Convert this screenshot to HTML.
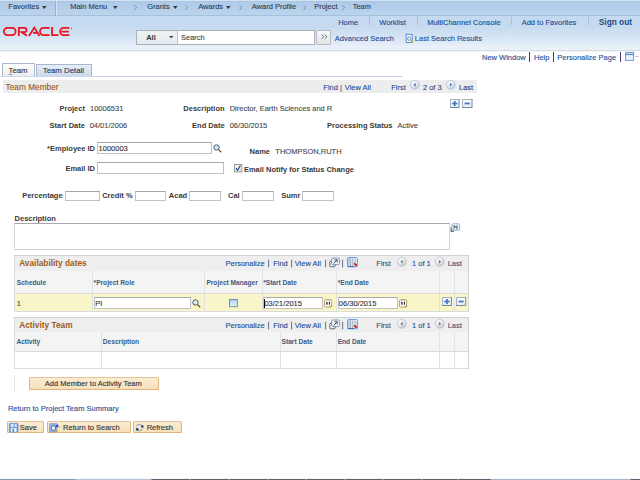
<!DOCTYPE html>
<html><head><meta charset="utf-8">
<style>
html,body{margin:0;padding:0;width:640px;height:480px;overflow:hidden;background:#fff;}
body{position:relative;font-family:"Liberation Sans",sans-serif;}
.t{position:absolute;white-space:nowrap;font-size:7.5px;line-height:10px;color:#333;-webkit-text-stroke:0.12px currentColor;}
.lk{color:#1f4f98;}
.nav{color:#2f3e55;}
.lab{color:#3a3a3a;font-weight:bold;-webkit-text-stroke:0;}
.val{color:#4a4a4a;}
.gh{color:#3d5a83;font-weight:bold;font-size:6.6px;-webkit-text-stroke:0;}
.bx{position:absolute;box-sizing:border-box;}
.inp{position:absolute;box-sizing:border-box;background:#fff;border:1px solid #c2c2c2;border-top-color:#a8a8a8;}
svg{display:block;}
</style></head><body>
<div class="bx" style="left:0px;top:0px;width:640px;height:16px;background:linear-gradient(#adcae8,#b4cfeb 50%,#bcd4ed);border-top:1px solid #d4e3f2;border-bottom:1px solid #a6c0da;"></div>
<div class="bx" style="left:0px;top:1px;width:640px;height:1px;background:#a9c5e3;"></div>
<div class="bx" style="left:0px;top:16px;width:640px;height:34px;background:linear-gradient(#c4daf0 0%,#c6dbf0 33%,#d2e2f3 55%,#dde9f6 75%,#e9f0f8 90%,#edf2f9 100%);"></div>
<div class="bx" style="left:0px;top:50px;width:640px;height:1px;background:#d5dce4;"></div>
<div class="bx" style="left:0px;top:51px;width:640px;height:1px;background:#f4f6f8;"></div>
<div class="t nav" style="left:8.30px;top:2px;">Favorites</div>
<div class="t nav" style="left:70.20px;top:2px;">Main Menu</div>
<div class="t nav" style="left:147.20px;top:2px;">Grants</div>
<div class="t nav" style="left:198.20px;top:2px;">Awards</div>
<div class="t nav" style="left:251.70px;top:2px;">Award Profile</div>
<div class="t nav" style="left:314.20px;top:2px;">Project</div>
<div class="t nav" style="left:352.70px;top:2px;">Team</div>
<svg style="position:absolute;left:42.2px;top:6px;overflow:visible" width="5" height="3" viewBox="0 0 5 3"><path d="M0 0H4.6L2.3 2.9Z" fill="#3a3a3a"/></svg>
<svg style="position:absolute;left:112.6px;top:6px;overflow:visible" width="5" height="3" viewBox="0 0 5 3"><path d="M0 0H4.6L2.3 2.9Z" fill="#3a3a3a"/></svg>
<svg style="position:absolute;left:172.6px;top:6px;overflow:visible" width="5" height="3" viewBox="0 0 5 3"><path d="M0 0H4.6L2.3 2.9Z" fill="#3a3a3a"/></svg>
<svg style="position:absolute;left:225.6px;top:6px;overflow:visible" width="5" height="3" viewBox="0 0 5 3"><path d="M0 0H4.6L2.3 2.9Z" fill="#3a3a3a"/></svg>
<svg style="position:absolute;left:134px;top:5px;overflow:visible" width="4" height="5" viewBox="0 0 4 5"><path d="M0.4 0.3L2.8 2.6L0.4 4.9" fill="none" stroke="#60809f" stroke-width="0.8"/></svg>
<svg style="position:absolute;left:184.5px;top:5px;overflow:visible" width="4" height="5" viewBox="0 0 4 5"><path d="M0.4 0.3L2.8 2.6L0.4 4.9" fill="none" stroke="#60809f" stroke-width="0.8"/></svg>
<svg style="position:absolute;left:238.8px;top:5px;overflow:visible" width="4" height="5" viewBox="0 0 4 5"><path d="M0.4 0.3L2.8 2.6L0.4 4.9" fill="none" stroke="#60809f" stroke-width="0.8"/></svg>
<svg style="position:absolute;left:303px;top:5px;overflow:visible" width="4" height="5" viewBox="0 0 4 5"><path d="M0.4 0.3L2.8 2.6L0.4 4.9" fill="none" stroke="#60809f" stroke-width="0.8"/></svg>
<svg style="position:absolute;left:341.6px;top:5px;overflow:visible" width="4" height="5" viewBox="0 0 4 5"><path d="M0.4 0.3L2.8 2.6L0.4 4.9" fill="none" stroke="#60809f" stroke-width="0.8"/></svg>
<div class="bx" style="left:55px;top:1px;width:1px;height:14.5px;background:#8eb0d8;"></div>
<div class="bx" style="left:56px;top:1px;width:1px;height:14.5px;background:#d6e4f4;"></div>
<div class="t " style="left:338.20px;top:18px;color:#1f4c92;">Home</div>
<div class="t " style="left:379.20px;top:18px;color:#1f4c92;">Worklist</div>
<div class="t " style="left:427.20px;top:18px;color:#1f4c92;">MultiChannel Console</div>
<div class="t " style="left:521.70px;top:18px;color:#1f4c92;">Add to Favorites</div>
<div class="t " style="left:598.80px;top:17px;font-size:8.3px;font-weight:bold;-webkit-text-stroke:0;color:#1b4787;">Sign out</div>
<div class="bx" style="left:369px;top:17px;width:1px;height:8px;background:#b0bfd0;"></div>
<div class="bx" style="left:416.5px;top:17px;width:1.0px;height:8px;background:#b0bfd0;"></div>
<div class="bx" style="left:511px;top:17px;width:1px;height:8px;background:#b0bfd0;"></div>
<div class="bx" style="left:587.5px;top:17px;width:1.0px;height:8px;background:#b0bfd0;"></div>
<svg style="position:absolute;left:0px;top:24px;overflow:visible" width="80" height="14" viewBox="0 0 80 14"><g fill="none" stroke="#e8141e" stroke-width="1.8"><rect x="3.9" y="3.95" width="11.7" height="7.2" rx="3.6"/><path d="M18.8 11.95V3.95H24.4A2.1 2.1 0 0 1 24.4 8.15H21.6L27 11.7"/><path d="M29 11.95L34.3 3.6L39.5 11.95"/><path d="M33.1 8.9H37.4"/><path d="M49.6 3.95H43.6A3.6 3.6 0 0 0 43.6 11.15H49.6"/><path d="M52.05 3.1V11.15H58.6"/><path d="M69.4 3.95H63.7A3.6 3.6 0 0 0 63.7 11.15H69.4M61.5 7.55H68.8"/></g><circle cx="71.6" cy="4.4" r="0.55" fill="#e8141e"/></svg>
<div class="bx" style="left:136px;top:30px;width:41.5px;height:15px;background:linear-gradient(#eef2f4,#e4eaee);border:1px solid #a9b2bb;"></div>
<div class="t " style="left:146.20px;top:33px;font-weight:bold;-webkit-text-stroke:0;color:#333;">All</div>
<svg style="position:absolute;left:169px;top:36px;overflow:visible" width="5" height="3" viewBox="0 0 5 3"><path d="M0 0H4.4L2.2 2.2Z" fill="#3a3a3a"/></svg>
<div class="bx" style="left:177px;top:30px;width:138px;height:15px;background:#fff;border:1px solid #a9b2bb;border-left-color:#c0c6cc;"></div>
<div class="t " style="left:181.00px;top:33px;color:#444;">Search</div>
<div class="bx" style="left:315.5px;top:29.5px;width:15.0px;height:15.0px;background:linear-gradient(#f8f8f8,#e2e4e6);border:1px solid #b6bcc2;border-radius:1px;"></div>
<svg style="position:absolute;left:320.5px;top:34px;overflow:visible" width="8" height="6" viewBox="0 0 8 6"><path d="M0.5 0.5L2.8 2.7L0.5 4.9M3.6 0.5L5.9 2.7L3.6 4.9" fill="none" stroke="#5a7292" stroke-width="1"/></svg>
<div class="t lk" style="left:334.80px;top:34px;">Advanced Search</div>
<svg style="position:absolute;left:404.5px;top:33px;overflow:visible" width="10" height="11" viewBox="0 0 10 11"><rect x="1.2" y="1.3" width="6" height="8.2" fill="#f2f7fd" stroke="#5a8ee0" stroke-width="1"/><circle cx="4.2" cy="5.6" r="1.7" fill="#e8f4fc" stroke="#6a7a98" stroke-width="0.8"/><path d="M5.3 6.9L7.9 9.6" stroke="#dcb818" stroke-width="1.3"/></svg>
<div class="t lk" style="left:414.80px;top:34px;">Last Search Results</div>
<div class="t lk" style="left:482.00px;top:53px;">New Window</div>
<div class="t lk" style="left:534.00px;top:53px;">Help</div>
<div class="t lk" style="left:557.30px;top:53px;">Personalize Page</div>
<div class="bx" style="left:529.2px;top:52px;width:1.0px;height:9.5px;background:#4a3470;"></div>
<div class="bx" style="left:553.2px;top:52px;width:1.0px;height:9.5px;background:#4a3470;"></div>
<div class="bx" style="left:619.8px;top:52px;width:1.0px;height:9.5px;background:#4a3470;"></div>
<svg style="position:absolute;left:624.6px;top:52px;overflow:visible" width="10" height="9" viewBox="0 0 10 9"><rect x="0.6" y="0.6" width="8" height="7.8" fill="#d4e4f6" stroke="#5a8ad0" stroke-width="0.9"/><path d="M0.6 2.5H8.6" stroke="#5a8ad0" stroke-width="1.1"/><path d="M2.9 3.1V8.4M4.8 3.1V8.4M6.7 3.1V8.4M0.6 5H8.6M0.6 6.8H8.6" stroke="#ffffff" stroke-width="0.6"/></svg>
<div class="bx" style="left:635px;top:56px;width:4px;height:1px;background:#c8ccd4;"></div>
<div class="bx" style="left:0px;top:76px;width:402px;height:1px;background:#c5cde5;"></div>
<div class="bx" style="left:2px;top:63px;width:33px;height:14px;background:linear-gradient(#ffffff,#ececec);border:1px solid #aab8ca;border-bottom:none;"></div>
<div class="t " style="left:8.50px;top:66px;font-size:7.8px;color:#333;"><u style="text-decoration-color:#8a9ab0">T</u>eam</div>
<div class="bx" style="left:0px;top:76px;width:94px;height:1px;background:#cdd5e8;"></div>
<div class="bx" style="left:36px;top:64px;width:56px;height:13px;background:linear-gradient(#e6eef7,#c9d8ea);border:1px solid #a8b7cb;border-bottom:none;"></div>
<div class="t " style="left:42.80px;top:66px;font-size:7.8px;color:#233a5f;">Team Detail</div>
<div class="bx" style="left:3px;top:80px;width:474px;height:13px;background:#ededed;"></div>
<div class="t " style="left:5.60px;top:82px;font-size:8.3px;color:#9c5814;">Team Member</div>
<div class="t lk" style="left:323.30px;top:83px;">Find</div>
<div class="t lk" style="left:339.90px;top:83px;">|</div>
<div class="t lk" style="left:344.80px;top:83px;">View All</div>
<div class="t lk" style="left:391.20px;top:83px;">First</div>
<div class="t " style="left:422.90px;top:83px;color:#3a4a68;">2 of 3</div>
<div class="t " style="left:459.00px;top:83px;color:#3a3c72;">Last</div>
<svg style="position:absolute;left:410.25px;top:80.4px;overflow:visible" width="10" height="10" viewBox="0 0 10 10"><defs><radialGradient id="cg1" cx="38%" cy="32%" r="75%"><stop offset="0" stop-color="#ffffff"/><stop offset="0.55" stop-color="#dde6f0"/><stop offset="1" stop-color="#aec2da"/></radialGradient></defs><circle cx="4.75" cy="4.75" r="4.5" fill="url(#cg1)" stroke="#b2c2d6" stroke-width="0.7"/><path d="M5.6 2.8L3.4 4.75L5.6 6.7Z" fill="#4a70b0"/></svg>
<svg style="position:absolute;left:446px;top:80.4px;overflow:visible" width="10" height="10" viewBox="0 0 10 10"><defs><radialGradient id="cg2" cx="38%" cy="32%" r="75%"><stop offset="0" stop-color="#ffffff"/><stop offset="0.55" stop-color="#dde6f0"/><stop offset="1" stop-color="#aec2da"/></radialGradient></defs><circle cx="4.75" cy="4.75" r="4.5" fill="url(#cg2)" stroke="#b2c2d6" stroke-width="0.7"/><path d="M3.9 2.8L6.1 4.75L3.9 6.7Z" fill="#4a70b0"/></svg>
<svg style="position:absolute;left:450.3px;top:98.5px;overflow:visible" width="9.5" height="9" viewBox="0 0 9.5 9"><defs><linearGradient id="pg1" x1="0" y1="0" x2="0" y2="1"><stop offset="0" stop-color="#ffffff"/><stop offset="1" stop-color="#e2eaf2"/></linearGradient></defs><rect x="0" y="0" width="9.5" height="9" fill="url(#pg1)"/><path d="M0.5 9V0.5H9.5" fill="none" stroke="#a4b0c0" stroke-width="1"/><path d="M0 8.5H9.0V0" fill="none" stroke="#7a869a" stroke-width="1"/><path d="M2.15 4.5H7.35" stroke="#3a78c4" stroke-width="1.7"/><path d="M4.75 1.9V7.1" stroke="#3a78c4" stroke-width="1.7"/></svg>
<svg style="position:absolute;left:462.3px;top:98.5px;overflow:visible" width="10.5" height="9" viewBox="0 0 10.5 9"><defs><linearGradient id="pg2" x1="0" y1="0" x2="0" y2="1"><stop offset="0" stop-color="#ffffff"/><stop offset="1" stop-color="#e2eaf2"/></linearGradient></defs><rect x="0" y="0" width="10.5" height="9" fill="url(#pg2)"/><path d="M0.5 9V0.5H10.5" fill="none" stroke="#a4b0c0" stroke-width="1"/><path d="M0 8.5H10.0V0" fill="none" stroke="#7a869a" stroke-width="1"/><path d="M2.65 4.5H7.85" stroke="#3a78c4" stroke-width="1.7"/></svg>
<div class="t lab" style="right:555.10px;top:104px;">Project</div>
<div class="t val" style="left:90.00px;top:104px;">10006531</div>
<div class="t lab" style="right:415.40px;top:104px;">Description</div>
<div class="t val" style="left:229.70px;top:104px;">Director, Earth Sciences and R</div>
<div class="t lab" style="right:555.10px;top:121px;">Start Date</div>
<div class="t val" style="left:89.70px;top:121px;">04/01/2006</div>
<div class="t lab" style="right:415.40px;top:121px;">End Date</div>
<div class="t val" style="left:229.70px;top:121px;">06/30/2015</div>
<div class="t lab" style="right:247.50px;top:121px;">Processing Status</div>
<div class="t val" style="left:397.40px;top:121px;">Active</div>
<div class="t lab" style="right:545.00px;top:144px;">*Employee ID</div>
<div class="inp" style="left:97px;top:142px;width:115px;height:12px;"></div>
<div class="t " style="left:98.60px;top:144px;color:#333;">1000003</div>
<svg style="position:absolute;left:212.6px;top:144.2px;overflow:visible" width="9" height="9" viewBox="0 0 9 9"><circle cx="3.5" cy="3.5" r="2.7" fill="#d6ecfb" stroke="#3a4c60" stroke-width="0.9"/><path d="M5.4 5.4L8.2 8.2" stroke="#7a4a20" stroke-width="1.3"/></svg>
<div class="t lab" style="left:249.60px;top:147px;">Name</div>
<div class="t val" style="left:275.30px;top:147px;">THOMPSON,RUTH</div>
<div class="t lab" style="right:545.00px;top:164px;">Email ID</div>
<div class="inp" style="left:97px;top:162px;width:127px;height:11.5px;"></div>
<svg style="position:absolute;left:233.6px;top:163.6px;overflow:visible" width="9" height="9" viewBox="0 0 9 9"><defs><linearGradient id="ck" x1="0" y1="0" x2="1" y2="1"><stop offset="0" stop-color="#f8f8f8"/><stop offset="1" stop-color="#dcdcdc"/></linearGradient></defs><rect x="0.5" y="0.5" width="7.4" height="7.4" fill="url(#ck)" stroke="#8e9298" stroke-width="0.9"/><path d="M2.1 4.1L3.5 6.2L6.4 1.5" fill="none" stroke="#1f3f8a" stroke-width="1.1"/></svg>
<div class="t lab" style="left:243.90px;top:165px;">Email Notify for Status Change</div>
<div class="t lab" style="left:22.20px;top:191px;">Percentage</div>
<div class="inp" style="left:64.5px;top:190.5px;width:35px;height:10.5px;"></div>
<div class="t lab" style="left:102.20px;top:191px;">Credit %</div>
<div class="inp" style="left:134.5px;top:190.5px;width:31px;height:10.5px;"></div>
<div class="t lab" style="left:168.80px;top:191px;">Acad</div>
<div class="inp" style="left:189.3px;top:190.5px;width:32px;height:10.5px;"></div>
<div class="t lab" style="left:228.00px;top:191px;">Cal</div>
<div class="inp" style="left:242.1px;top:190.5px;width:31.8px;height:10.5px;"></div>
<div class="t lab" style="left:281.20px;top:191px;">Sumr</div>
<div class="inp" style="left:302.3px;top:190.5px;width:31.5px;height:10.5px;"></div>
<div class="t lab" style="left:14.60px;top:214px;">Description</div>
<div class="inp" style="left:14.2px;top:223px;width:435.6px;height:26.5px;border:1px solid #d4d4dc;border-top:1.5px solid #a8a8b0;"></div>
<svg style="position:absolute;left:449.8px;top:223.2px;overflow:visible" width="11" height="10" viewBox="0 0 11 10"><path d="M1.2 4.2V8.2H4" fill="none" stroke="#3a3f48" stroke-width="1.1"/><rect x="1.9" y="0.7" width="7.6" height="6.4" rx="1.3" fill="#f4f7fb" stroke="#95b3dc" stroke-width="1.1"/><path d="M4.1 5.6V2.4L6.9 5.6V2.4" fill="none" stroke="#27354f" stroke-width="0.9"/></svg>
<div class="bx" style="left:14px;top:255px;width:455px;height:56.5px;border:1px solid #d8dade;border-top-color:#cdd2d8;border-right-color:#d0d2d6;background:#fff;"></div>
<div class="bx" style="left:15px;top:256px;width:453px;height:14.5px;background:#eeeeee;"></div>
<div class="t " style="left:19.20px;top:258px;font-size:8.3px;font-weight:bold;-webkit-text-stroke:0;color:#9e5c1a;">Availability dates</div>
<div class="t lk" style="left:225.50px;top:259px;">Personalize</div>
<div class="t lk" style="left:273.20px;top:259px;">Find</div>
<div class="t lk" style="left:294.70px;top:259px;">View All</div>
<svg style="position:absolute;left:268.3px;top:259px;overflow:visible" width="2" height="10" viewBox="0 0 2 10"><path d="M0.6 0.8V8.4" stroke="#4a5c7c" stroke-width="0.85"/></svg>
<svg style="position:absolute;left:291.1px;top:259px;overflow:visible" width="2" height="10" viewBox="0 0 2 10"><path d="M0.6 0.8V8.4" stroke="#4a5c7c" stroke-width="0.85"/></svg>
<svg style="position:absolute;left:325.2px;top:259px;overflow:visible" width="2" height="10" viewBox="0 0 2 10"><path d="M0.6 0.8V8.4" stroke="#4a5c7c" stroke-width="0.85"/></svg>
<svg style="position:absolute;left:342px;top:259px;overflow:visible" width="2" height="10" viewBox="0 0 2 10"><path d="M0.6 0.8V8.4" stroke="#4a5c7c" stroke-width="0.85"/></svg>
<svg style="position:absolute;left:328.6px;top:256.8px;overflow:visible" width="11" height="11" viewBox="0 0 11 11"><rect x="2.6" y="1" width="8" height="6.6" rx="1.3" fill="#f0f3f8" stroke="#8a9ab2" stroke-width="1"/><path d="M2.6 4.2H1.9A1.1 1.1 0 0 0 0.8 5.3V8.7A1.1 1.1 0 0 0 1.9 9.8H5.1A1.1 1.1 0 0 0 6.2 8.7V7.6" fill="none" stroke="#5a6478" stroke-width="1"/><path d="M4.6 6.4L7.6 3.4M5.6 2.8H8.2V5.4" fill="none" stroke="#2a3448" stroke-width="0.9"/></svg>
<svg style="position:absolute;left:347px;top:257px;overflow:visible" width="11" height="10" viewBox="0 0 11 10"><rect x="0.5" y="0.5" width="10" height="9.3" rx="1" fill="#e6eefa" stroke="#6f9ee0" stroke-width="1"/><rect x="1" y="1" width="2.4" height="8.2" fill="#b4cdf0"/><path d="M3.6 1.4V9M5.6 1.4V9M8.2 1.4V6" stroke="#98a2ae" stroke-width="0.8"/><path d="M1 3.5H10M1 5.7H10" stroke="#c4ccd8" stroke-width="0.6"/><path d="M0.8 9.5H7" stroke="#3a64a8" stroke-width="0.9"/><path d="M7.2 6.4L9.6 8.7" stroke="#c40f1a" stroke-width="1.9"/></svg>
<div class="t " style="left:376.30px;top:259px;color:#46526a;">First</div>
<svg style="position:absolute;left:397px;top:257px;overflow:visible" width="10" height="10" viewBox="0 0 10 10"><defs><radialGradient id="cg3" cx="38%" cy="32%" r="75%"><stop offset="0" stop-color="#ffffff"/><stop offset="0.55" stop-color="#e4e6ea"/><stop offset="1" stop-color="#b4bac4"/></radialGradient></defs><circle cx="4.75" cy="4.75" r="4.5" fill="url(#cg3)" stroke="#bcc2ca" stroke-width="0.7"/><path d="M5.6 2.8L3.4 4.75L5.6 6.7Z" fill="#6a7482"/></svg>
<div class="t lk" style="left:412.00px;top:259px;">1 of 1</div>
<svg style="position:absolute;left:435px;top:257px;overflow:visible" width="10" height="10" viewBox="0 0 10 10"><defs><radialGradient id="cg4" cx="38%" cy="32%" r="75%"><stop offset="0" stop-color="#ffffff"/><stop offset="0.55" stop-color="#e4e6ea"/><stop offset="1" stop-color="#b4bac4"/></radialGradient></defs><circle cx="4.75" cy="4.75" r="4.5" fill="url(#cg4)" stroke="#bcc2ca" stroke-width="0.7"/><path d="M3.9 2.8L6.1 4.75L3.9 6.7Z" fill="#6a7482"/></svg>
<div class="t " style="left:447.70px;top:259px;color:#46526a;">Last</div>
<div class="bx" style="left:15px;top:270.5px;width:453px;height:23.0px;background:#f4f4f4;border-bottom:1px solid #dadada;"></div>
<div class="bx" style="left:15px;top:293.5px;width:453px;height:17.5px;background:#f8f6c9;"></div>
<div class="bx" style="left:92px;top:270.5px;width:1px;height:40.5px;background:#e2e2e2;"></div>
<div class="bx" style="left:203.5px;top:270.5px;width:1.0px;height:40.5px;background:#e2e2e2;"></div>
<div class="bx" style="left:262px;top:270.5px;width:1px;height:40.5px;background:#e2e2e2;"></div>
<div class="bx" style="left:336px;top:270.5px;width:1px;height:40.5px;background:#e2e2e2;"></div>
<div class="bx" style="left:439px;top:270.5px;width:1px;height:40.5px;background:#e2e2e2;"></div>
<div class="bx" style="left:454px;top:270.5px;width:1px;height:40.5px;background:#e2e2e2;"></div>
<div class="t gh" style="left:16.80px;top:278px;">Schedule</div>
<div class="t gh" style="left:93.60px;top:278px;">*Project Role</div>
<div class="t gh" style="left:206.40px;top:278px;">Project Manager</div>
<div class="t gh" style="left:263.20px;top:278px;">*Start Date</div>
<div class="t gh" style="left:337.70px;top:278px;">*End Date</div>
<div class="t " style="left:16.80px;top:299px;color:#444;">1</div>
<div class="inp" style="left:94px;top:297px;width:96.5px;height:11.5px;"></div>
<div class="t " style="left:95.30px;top:299px;color:#333;">PI</div>
<svg style="position:absolute;left:191.6px;top:299.4px;overflow:visible" width="9" height="9" viewBox="0 0 9 9"><circle cx="3.5" cy="3.5" r="2.7" fill="#d6ecfb" stroke="#3a4c60" stroke-width="0.9"/><path d="M5.4 5.4L8.2 8.2" stroke="#7a4a20" stroke-width="1.3"/></svg>
<svg style="position:absolute;left:229px;top:298.8px;overflow:visible" width="9" height="9" viewBox="0 0 9 9"><defs><linearGradient id="cb" x1="0" y1="0" x2="0" y2="1"><stop offset="0" stop-color="#8cbff0"/><stop offset="0.25" stop-color="#bcdcf8"/><stop offset="1" stop-color="#e2f4fd"/></linearGradient></defs><rect x="0.5" y="0.5" width="7.8" height="7.2" fill="url(#cb)" stroke="#7088a4" stroke-width="0.9"/></svg>
<div class="inp" style="left:263px;top:297px;width:59.7px;height:11.5px;"></div>
<div class="t " style="left:264.40px;top:299px;color:#333;">03/21/2015</div>
<div class="bx" style="left:264px;top:299px;width:0.8000000000000114px;height:8.5px;background:#111;"></div>
<div class="inp" style="left:337.5px;top:297px;width:60px;height:11.5px;"></div>
<div class="t " style="left:338.80px;top:299px;color:#333;">06/30/2015</div>
<svg style="position:absolute;left:324px;top:298.8px;overflow:visible" width="9" height="9" viewBox="0 0 9 9"><rect x="0.5" y="0.7" width="7.2" height="7.4" rx="0.8" fill="#fbf6e8" stroke="#b99a62" stroke-width="0.9"/><rect x="1.6" y="2" width="5" height="4.6" fill="#ffffff"/><rect x="2.1" y="2.9" width="1.6" height="2.8" fill="#3c4258"/><rect x="4.9" y="2.8" width="1" height="2.9" fill="#1a1a24"/><circle cx="2.8" cy="0.9" r="0.5" fill="#8a80a0"/><circle cx="5.4" cy="0.9" r="0.5" fill="#8a80a0"/><path d="M5.6 8.1L7.7 6" stroke="#a86a40" stroke-width="0.9"/></svg>
<svg style="position:absolute;left:398.6px;top:298.8px;overflow:visible" width="9" height="9" viewBox="0 0 9 9"><rect x="0.5" y="0.7" width="7.2" height="7.4" rx="0.8" fill="#fbf6e8" stroke="#b99a62" stroke-width="0.9"/><rect x="1.6" y="2" width="5" height="4.6" fill="#ffffff"/><rect x="2.1" y="2.9" width="1.6" height="2.8" fill="#3c4258"/><rect x="4.9" y="2.8" width="1" height="2.9" fill="#1a1a24"/><circle cx="2.8" cy="0.9" r="0.5" fill="#8a80a0"/><circle cx="5.4" cy="0.9" r="0.5" fill="#8a80a0"/><path d="M5.6 8.1L7.7 6" stroke="#a86a40" stroke-width="0.9"/></svg>
<svg style="position:absolute;left:442px;top:297.2px;overflow:visible" width="10" height="9" viewBox="0 0 10 9"><defs><linearGradient id="pg3" x1="0" y1="0" x2="0" y2="1"><stop offset="0" stop-color="#ffffff"/><stop offset="1" stop-color="#e2eaf2"/></linearGradient></defs><rect x="0" y="0" width="10" height="9" fill="url(#pg3)"/><path d="M0.5 9V0.5H10" fill="none" stroke="#a4b0c0" stroke-width="1"/><path d="M0 8.5H9.5V0" fill="none" stroke="#7a869a" stroke-width="1"/><path d="M2.40 4.5H7.60" stroke="#3a78c4" stroke-width="1.7"/><path d="M5.00 1.9V7.1" stroke="#3a78c4" stroke-width="1.7"/></svg>
<svg style="position:absolute;left:456.1px;top:297.2px;overflow:visible" width="10.2" height="9" viewBox="0 0 10.2 9"><defs><linearGradient id="pg4" x1="0" y1="0" x2="0" y2="1"><stop offset="0" stop-color="#ffffff"/><stop offset="1" stop-color="#e2eaf2"/></linearGradient></defs><rect x="0" y="0" width="10.2" height="9" fill="url(#pg4)"/><path d="M0.5 9V0.5H10.2" fill="none" stroke="#a4b0c0" stroke-width="1"/><path d="M0 8.5H9.7V0" fill="none" stroke="#7a869a" stroke-width="1"/><path d="M2.50 4.5H7.70" stroke="#3a78c4" stroke-width="1.7"/></svg>
<div class="bx" style="left:14px;top:317.3px;width:455px;height:52.19999999999999px;border:1px solid #d8dade;border-top-color:#cdd2d8;border-right-color:#d0d2d6;background:#fff;"></div>
<div class="bx" style="left:15px;top:318.3px;width:453px;height:13.699999999999989px;background:#eeeeee;"></div>
<div class="t " style="left:19.20px;top:320px;font-size:8.3px;font-weight:bold;-webkit-text-stroke:0;color:#9e5c1a;">Activity Team</div>
<div class="t lk" style="left:225.50px;top:321px;">Personalize</div>
<div class="t lk" style="left:273.20px;top:321px;">Find</div>
<div class="t lk" style="left:294.70px;top:321px;">View All</div>
<svg style="position:absolute;left:268.3px;top:321.3px;overflow:visible" width="2" height="10" viewBox="0 0 2 10"><path d="M0.6 0.8V8.4" stroke="#4a5c7c" stroke-width="0.85"/></svg>
<svg style="position:absolute;left:291.1px;top:321.3px;overflow:visible" width="2" height="10" viewBox="0 0 2 10"><path d="M0.6 0.8V8.4" stroke="#4a5c7c" stroke-width="0.85"/></svg>
<svg style="position:absolute;left:325.2px;top:321.3px;overflow:visible" width="2" height="10" viewBox="0 0 2 10"><path d="M0.6 0.8V8.4" stroke="#4a5c7c" stroke-width="0.85"/></svg>
<svg style="position:absolute;left:342px;top:321.3px;overflow:visible" width="2" height="10" viewBox="0 0 2 10"><path d="M0.6 0.8V8.4" stroke="#4a5c7c" stroke-width="0.85"/></svg>
<svg style="position:absolute;left:328.6px;top:319.1px;overflow:visible" width="11" height="11" viewBox="0 0 11 11"><rect x="2.6" y="1" width="8" height="6.6" rx="1.3" fill="#f0f3f8" stroke="#8a9ab2" stroke-width="1"/><path d="M2.6 4.2H1.9A1.1 1.1 0 0 0 0.8 5.3V8.7A1.1 1.1 0 0 0 1.9 9.8H5.1A1.1 1.1 0 0 0 6.2 8.7V7.6" fill="none" stroke="#5a6478" stroke-width="1"/><path d="M4.6 6.4L7.6 3.4M5.6 2.8H8.2V5.4" fill="none" stroke="#2a3448" stroke-width="0.9"/></svg>
<svg style="position:absolute;left:347px;top:319.3px;overflow:visible" width="11" height="10" viewBox="0 0 11 10"><rect x="0.5" y="0.5" width="10" height="9.3" rx="1" fill="#e6eefa" stroke="#6f9ee0" stroke-width="1"/><rect x="1" y="1" width="2.4" height="8.2" fill="#b4cdf0"/><path d="M3.6 1.4V9M5.6 1.4V9M8.2 1.4V6" stroke="#98a2ae" stroke-width="0.8"/><path d="M1 3.5H10M1 5.7H10" stroke="#c4ccd8" stroke-width="0.6"/><path d="M0.8 9.5H7" stroke="#3a64a8" stroke-width="0.9"/><path d="M7.2 6.4L9.6 8.7" stroke="#c40f1a" stroke-width="1.9"/></svg>
<div class="t " style="left:376.30px;top:321px;color:#46526a;">First</div>
<svg style="position:absolute;left:397px;top:319.3px;overflow:visible" width="10" height="10" viewBox="0 0 10 10"><defs><radialGradient id="cg5" cx="38%" cy="32%" r="75%"><stop offset="0" stop-color="#ffffff"/><stop offset="0.55" stop-color="#e4e6ea"/><stop offset="1" stop-color="#b4bac4"/></radialGradient></defs><circle cx="4.75" cy="4.75" r="4.5" fill="url(#cg5)" stroke="#bcc2ca" stroke-width="0.7"/><path d="M5.6 2.8L3.4 4.75L5.6 6.7Z" fill="#6a7482"/></svg>
<div class="t lk" style="left:412.00px;top:321px;">1 of 1</div>
<svg style="position:absolute;left:435px;top:319.3px;overflow:visible" width="10" height="10" viewBox="0 0 10 10"><defs><radialGradient id="cg6" cx="38%" cy="32%" r="75%"><stop offset="0" stop-color="#ffffff"/><stop offset="0.55" stop-color="#e4e6ea"/><stop offset="1" stop-color="#b4bac4"/></radialGradient></defs><circle cx="4.75" cy="4.75" r="4.5" fill="url(#cg6)" stroke="#bcc2ca" stroke-width="0.7"/><path d="M3.9 2.8L6.1 4.75L3.9 6.7Z" fill="#6a7482"/></svg>
<div class="t " style="left:447.70px;top:321px;color:#46526a;">Last</div>
<div class="bx" style="left:15px;top:332px;width:453px;height:19.5px;background:#f4f4f4;border-bottom:1px solid #dadada;"></div>
<div class="bx" style="left:101px;top:332px;width:1px;height:37px;background:#e2e2e2;"></div>
<div class="bx" style="left:280px;top:332px;width:1px;height:37px;background:#e2e2e2;"></div>
<div class="bx" style="left:336px;top:332px;width:1px;height:37px;background:#e2e2e2;"></div>
<div class="bx" style="left:439px;top:332px;width:1px;height:37px;background:#e2e2e2;"></div>
<div class="bx" style="left:454px;top:332px;width:1px;height:37px;background:#e2e2e2;"></div>
<div class="t gh" style="left:16.40px;top:337px;">Activity</div>
<div class="t gh" style="left:102.80px;top:337px;">Description</div>
<div class="t gh" style="left:281.60px;top:337px;">Start Date</div>
<div class="t gh" style="left:337.70px;top:337px;">End Date</div>
<div class="bx" style="left:14px;top:375px;width:1px;height:16.5px;background:#e6e6e6;"></div>
<div class="bx" style="left:29px;top:376.8px;width:130px;height:13.199999999999989px;background:linear-gradient(#fcebd3,#f6e1ba);border:1px solid #e0b47e;border-top-color:#e6c49a;border-radius:1.5px;"></div>
<div class="t " style="left:44.80px;top:379px;color:#333;">Add Member to Activity Team</div>
<div class="t lk" style="left:7.90px;top:404px;">Return to Project Team Summary</div>
<div class="bx" style="left:7px;top:421.2px;width:37.3px;height:12.300000000000011px;background:linear-gradient(#fcebd3,#f6e1ba);border:1px solid #e0b47e;border-top-color:#e6c49a;border-radius:1.5px;"></div>
<svg style="position:absolute;left:9px;top:422.8px;overflow:visible" width="10" height="10" viewBox="0 0 10 10"><rect x="0.4" y="0.4" width="8.6" height="8.6" rx="0.6" fill="#5e9ae2" stroke="#4c88d6" stroke-width="0.7"/><rect x="1.6" y="0.9" width="6.2" height="3.2" fill="#d8e8f8"/><rect x="4.6" y="1.2" width="1.2" height="2.6" fill="#5e9ae2"/><rect x="1.8" y="5.2" width="5.8" height="3.6" fill="#f4f8fc"/><rect x="3.6" y="5.8" width="1.3" height="3" fill="#2a62c0"/></svg>
<div class="t " style="left:19.80px;top:423px;color:#333;">Save</div>
<div class="bx" style="left:47.2px;top:421.2px;width:83.39999999999999px;height:12.300000000000011px;background:linear-gradient(#fcebd3,#f6e1ba);border:1px solid #e0b47e;border-top-color:#e6c49a;border-radius:1.5px;"></div>
<svg style="position:absolute;left:48.5px;top:422.5px;overflow:visible" width="14" height="10" viewBox="0 0 14 10"><rect x="0.7" y="0.7" width="7.2" height="8.2" fill="#8cb2ea" stroke="#6c9ade" stroke-width="0.6"/><circle cx="4.4" cy="5" r="2.3" fill="#eef5fc" stroke="#4a6a98" stroke-width="0.9"/><path d="M6 6.7L8.4 9.1" stroke="#d9a21e" stroke-width="1.4"/><path d="M8.2 0.9L8.9 2.5L10.6 2.9L8.9 3.4L8.2 5L7.5 3.4L5.9 2.9L7.5 2.5Z" fill="#1a3a8c"/><path d="M9.2 3.3L11.8 4.6" stroke="#a8b8cc" stroke-width="0.8"/></svg>
<div class="t " style="left:63.10px;top:423px;color:#333;">Return to Search</div>
<div class="bx" style="left:133.1px;top:421.2px;width:48.599999999999994px;height:12.300000000000011px;background:linear-gradient(#fcebd3,#f6e1ba);border:1px solid #e0b47e;border-top-color:#e6c49a;border-radius:1.5px;"></div>
<svg style="position:absolute;left:135px;top:423px;overflow:visible" width="10" height="10" viewBox="0 0 10 10"><path d="M1.3 3.6A3.3 3.3 0 0 1 7.4 3.2" fill="none" stroke="#8e9cb8" stroke-width="1"/><path d="M7.6 5.6A3.3 3.3 0 0 1 1.6 6.2" fill="none" stroke="#8e9cb8" stroke-width="1"/><path d="M6.2 2.4H8.4V4.6H6.2Z" fill="#10308a"/><path d="M1 5.2H3.4V7.4H1Z" fill="#10308a"/></svg>
<div class="t " style="left:146.70px;top:423px;color:#333;">Refresh</div>
<div class="bx" style="left:0px;top:478px;width:640px;height:1px;background:#f4f6f8;"></div>
<div class="bx" style="left:0;top:479px;width:640px;height:1px;background:linear-gradient(90deg,#8a9cb2 0px,#8a9cb2 75px,#b4c4d4 76px,#b4c4d4 151px,#5c6066 152px,#5c6066 189px,#a8b4c0 190px,#5c6066 191px,#5c6066 228px,#a8b4c0 229px,#5c6066 230px,#5c6066 267px,#a8b4c0 268px,#5c6066 269px,#5c6066 305px,#a8b4c0 306px,#5c6066 307px,#5c6066 344px,#a8b4c0 345px,#5c6066 346px,#5c6066 382px,#a8b4c0 383px,#5c6066 384px,#5c6066 421px,#a8b4c0 422px,#5c6066 423px,#5c6066 457px,#a8b4c0 458px,#5c6066 459px,#5c6066 490px,#a8b8c8 491px,#a8b8c8 630px,#5c6066 631px,#5c6066 640px);"></div>
</body></html>
